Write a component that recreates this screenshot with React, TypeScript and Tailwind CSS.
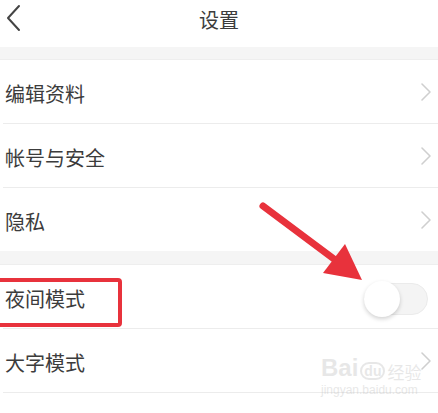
import React from "react";

const Chevron = () => (
  <svg width="12" height="20" viewBox="0 0 12 20" fill="none" className="shrink-0">
    <path d="M2 2l8 8-8 8" stroke="#cfcfcf" strokeWidth="1.6" strokeLinecap="round" strokeLinejoin="round" />
  </svg>
);

const Row = ({ label, right }: { label: string; right?: React.ReactNode }) => (
  <div className="flex items-center justify-between h-[64px] pl-[5px] pr-[6px] border-b border-[#ececec] ml-[3px]">
    <span className="text-[20px] text-[#3c3c3c] -ml-[3px] pt-[4px]">{label}</span>
    {right ?? <Chevron />}
  </div>
);

const Toggle = () => (
  <div className="relative w-[64px] h-[32px] rounded-full bg-[#f4f4f4] border border-[#ebebeb] mr-[4px] mt-[4px]">
    <div className="absolute -left-[1px] -top-[3px] w-[36px] h-[36px] rounded-full bg-white shadow-[0_2px_4px_rgba(0,0,0,0.18)]" />
  </div>
);

export default function App() {
  return (
    <div
      className="relative w-[438px] h-[413px] bg-white overflow-hidden"
      style={{ fontFamily: '"Noto Sans CJK SC", "Noto Sans", sans-serif' }}
    >
      <div className="relative flex items-center justify-center h-[47px]">
        <svg width="20" height="30" viewBox="0 0 20 30" fill="none" className="absolute left-[4px] top-[3px]">
          <path d="M15 3L4 15l11 12" stroke="#444" strokeWidth="2" strokeLinecap="round" strokeLinejoin="round" />
        </svg>
        <span className="text-[20px] text-[#3c3c3c] -mt-[8px]">设置</span>
      </div>
      <div className="h-[13px] bg-[#f5f5f5] border-b border-[#eeeeee]" />
      <Row label="编辑资料" />
      <Row label="帐号与安全" />
      <div className="flex items-center justify-between h-[63px] pl-[5px] pr-[6px] ml-[3px]">
        <span className="text-[20px] text-[#3c3c3c] -ml-[3px] pt-[4px]">隐私</span>
        <Chevron />
      </div>
      <div className="h-[14px] bg-[#f5f5f5] border-b border-[#eeeeee]" />
      <Row label="夜间模式" right={<Toggle />} />
      <Row label="大字模式" />

      {/* red highlight box */}
      <div className="absolute left-[-4px] top-[278px] w-[126px] h-[49px] border-[4px] border-[#e8323c] rounded-[4px]" />

      {/* red arrow */}
      <svg className="absolute left-0 top-0" width="438" height="413" viewBox="0 0 438 413">
        <line x1="263" y1="206" x2="338" y2="262" stroke="#e8323c" strokeWidth="7" strokeLinecap="round" />
        <polygon points="362,280 323,273 345,244" fill="#e8323c" />
      </svg>

      {/* watermark */}
      <div className="absolute left-[321px] top-[356px] flex flex-col items-start opacity-35 text-[#bdbdbd] leading-none">
        <div className="flex items-end">
          <span className="text-[24px] font-bold" style={{ fontFamily: '"Liberation Sans", sans-serif' }}>Bai</span>
          <span className="text-[14px] font-bold rounded-full border-2 border-[#bdbdbd] px-[2px] mx-[2px]" style={{ fontFamily: '"Liberation Sans", sans-serif' }}>du</span>
          <span className="text-[17px]">经验</span>
        </div>
        <span className="text-[12px] mt-[4px]" style={{ fontFamily: '"Liberation Sans", sans-serif' }}>jingyan.baidu.com</span>
      </div>
    </div>
  );
}
